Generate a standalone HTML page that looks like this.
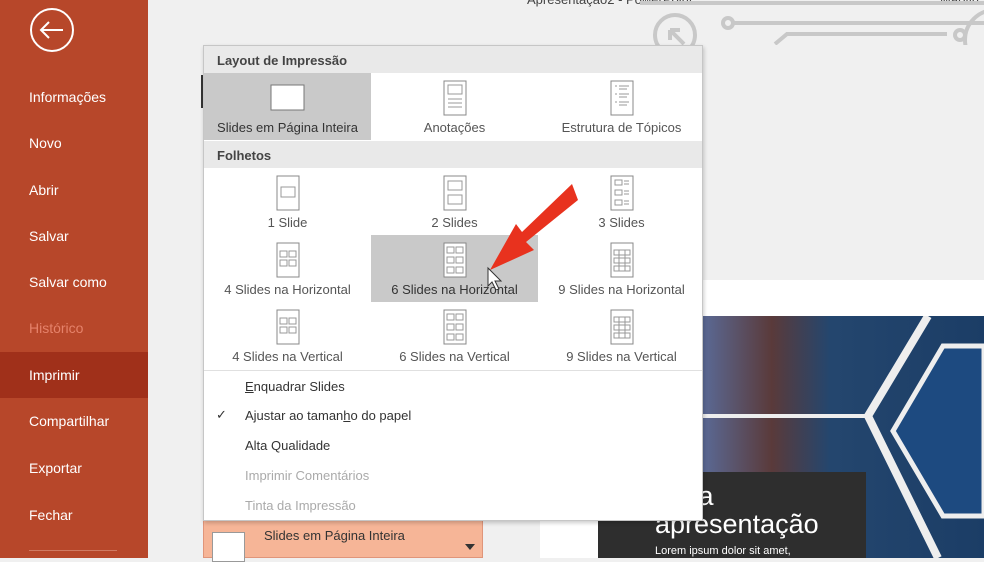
<!DOCTYPE html>
<html><head><meta charset="utf-8"><style>
*{margin:0;padding:0;box-sizing:border-box}
body{width:984px;height:558px;overflow:hidden;background:#f0f0f0;font-family:"Liberation Sans",sans-serif;position:relative;color:#444}
.side{position:absolute;left:0;top:0;width:148px;height:558px;background:#b7472a}
.side div{position:absolute;left:29px;color:#fff;font-size:14px}
.abs{position:absolute}
.dd{position:absolute;left:203px;top:45px;width:500px;height:476px;background:#fff;border:1px solid #c6c6c6;box-shadow:1px 2px 4px rgba(0,0,0,.2)}
.hdr{position:absolute;left:0;width:498px;height:27px;background:#e9e9e9;font-weight:bold;font-size:13px;color:#444;padding:7px 0 0 13px}
.cell{position:absolute;width:167px;height:67px;text-align:center;font-size:13px;color:#555}
.cell svg{display:block;margin:7px auto 4px}
.mi{position:absolute;left:41px;font-size:13px;color:#333}
.dis{color:#aaa}
</style></head><body>
<div class="side">
<svg class="abs" style="left:29px;top:7px" width="46" height="46"><circle cx="23" cy="23" r="21" fill="none" stroke="#fff" stroke-width="2"/><path d="M34 23H12M20 15l-8 8 8 8" fill="none" stroke="#fff" stroke-width="2"/></svg>
<div style="top:89px">Informações</div>
<div style="top:135px">Novo</div>
<div style="top:182px">Abrir</div>
<div style="top:228px">Salvar</div>
<div style="top:274px">Salvar como</div>
<div style="top:320px;color:#e5826a">Histórico</div>
<div style="top:352px;left:0;width:148px;height:46px;background:#a0301a"></div>
<div style="top:367px">Imprimir</div>
<div style="top:413px">Compartilhar</div>
<div style="top:460px">Exportar</div>
<div style="top:507px">Fechar</div>
<div style="top:550px;width:88px;height:1px;background:#d07a62"></div>
</div>
<div class="abs" style="left:527px;top:-8px;font-size:13px;color:#444">Apresentação2 - PowerPoint</div>
<div class="abs" style="left:940px;top:-8px;font-size:13px;color:#444">Marvin</div>
<svg class="abs" style="left:640px;top:0" width="344" height="45"><g fill="none" stroke="#c8c8c8" stroke-width="4"><circle cx="35" cy="35" r="20"/><path d="M30 30l14 14M30 30v10M30 30h10"/><circle cx="88" cy="23" r="5"/><path d="M93 23h260l20 18"/><path d="M135 44l12-10h160"/><circle cx="320" cy="35" r="5"/><path d="M0 3h360l40 40"/><circle cx="366" cy="4" r="5"/><circle cx="355" cy="40" r="30"/></g></svg>
<div class="abs" style="left:540px;top:280px;width:444px;height:278px;background:#fff"></div>
<div class="abs" style="left:598px;top:316px;width:386px;height:242px;background:linear-gradient(90deg,#2b4f7a 0%,#5a6fa0 25%,#5a3a3a 45%,#24466e 60%,#1b3d66 100%)"></div>
<svg class="abs" style="left:598px;top:316px" width="386" height="242"><path d="M330 0L270 100L340 242" fill="none" stroke="#eee" stroke-width="8"/><path d="M0 100H270" stroke="#eee" stroke-width="4"/><path d="M345 30h41v170h-41l-50-85z" fill="#1d4a80" stroke="#eee" stroke-width="5"/></svg>
<div class="abs" style="left:598px;top:472px;width:268px;height:86px;background:#2e2e2e"></div>
<div class="abs" style="left:655px;top:482px;color:#fff;font-size:27px;line-height:28px">lo da<br>apresentação</div>
<div class="abs" style="left:655px;top:545px;color:#fff;font-size:11px">Lorem ipsum dolor sit amet,</div>
<div class="abs" style="left:203px;top:520px;width:280px;height:38px;background:#f6b597;border:1px solid #e0957a"></div>
<div class="abs" style="left:212px;top:532px;width:33px;height:30px;background:#fff;border:1px solid #999"></div>
<div class="abs" style="left:264px;top:528px;font-size:13px;color:#333">Slides em Página Inteira</div>
<div class="abs" style="left:465px;top:544px;border:5px solid transparent;border-top:6px solid #333"></div>
<div class="abs" style="left:201px;top:75px;width:3px;height:33px;background:#333"></div>
<div class="dd">
<div class="hdr" style="top:0">Layout de Impressão</div>
<div class="cell" style="left:0;top:27px;background:#c9c9c9"><svg width="36" height="28" style="margin-top:11px;margin-bottom:8px"><rect x="1" y="1" width="33" height="25" fill="#fff" stroke="#777"/></svg><span style="color:#333">Slides em Página Inteira</span></div>
<div class="cell" style="left:167px;top:27px"><svg width="28" height="36" style="margin-top:7px"><rect x="3" y="1" width="22" height="34" fill="#fff" stroke="#888"/><rect x="7" y="5" width="14" height="9" fill="none" stroke="#999"/><path d="M7 19h14M7 23h14M7 27h14" stroke="#999"/></svg>Anotações</div>
<div class="cell" style="left:334px;top:27px"><svg width="28" height="36" style="margin-top:7px"><rect x="3" y="1" width="22" height="34" fill="#fff" stroke="#888"/><path d="M7 6h2M11 6h10M11 9h8M7 14h2M11 14h10M11 17h8M7 22h2M11 22h10M11 25h8" stroke="#999"/></svg>Estrutura de Tópicos</div>
<div class="hdr" style="top:95px">Folhetos</div>
<div class="cell" style="left:0;top:122px"><svg width="28" height="36"><rect x="3" y="1" width="22" height="34" fill="#fff" stroke="#888"/><rect x="7" y="12" width="14" height="10" fill="none" stroke="#999"/></svg>1 Slide</div>
<div class="cell" style="left:167px;top:122px"><svg width="28" height="36"><rect x="3" y="1" width="22" height="34" fill="#fff" stroke="#888"/><rect x="7" y="6" width="14" height="9" fill="none" stroke="#999"/><rect x="7" y="20" width="14" height="9" fill="none" stroke="#999"/></svg>2 Slides</div>
<div class="cell" style="left:334px;top:122px"><svg width="28" height="36"><rect x="3" y="1" width="22" height="34" fill="#fff" stroke="#888"/><g fill="none" stroke="#999"><rect x="7" y="5" width="7" height="5"/><rect x="7" y="15" width="7" height="5"/><rect x="7" y="25" width="7" height="5"/><path d="M16 6h5M16 9h5M16 16h5M16 19h5M16 26h5M16 29h5"/></g></svg>3 Slides</div>
<div class="cell" style="left:0;top:189px"><svg width="28" height="36"><rect x="3" y="1" width="22" height="34" fill="#fff" stroke="#888"/><g fill="none" stroke="#999"><rect x="6" y="9" width="7" height="6"/><rect x="15" y="9" width="7" height="6"/><rect x="6" y="18" width="7" height="6"/><rect x="15" y="18" width="7" height="6"/></g></svg>4 Slides na Horizontal</div>
<div class="cell" style="left:167px;top:189px;background:#c9c9c9;color:#333"><svg width="28" height="36"><rect x="3" y="1" width="22" height="34" fill="#fff" stroke="#888"/><g fill="none" stroke="#999"><rect x="6" y="5" width="7" height="6"/><rect x="15" y="5" width="7" height="6"/><rect x="6" y="15" width="7" height="6"/><rect x="15" y="15" width="7" height="6"/><rect x="6" y="25" width="7" height="6"/><rect x="15" y="25" width="7" height="6"/></g></svg>6 Slides na Horizontal</div>
<div class="cell" style="left:334px;top:189px"><svg width="28" height="36"><rect x="3" y="1" width="22" height="34" fill="#fff" stroke="#888"/><g fill="none" stroke="#999"><path d="M6 8h16v5H6zM6 16h16v5H6zM6 24h16v5H6zM11 8v21M17 8v21"/></g></svg>9 Slides na Horizontal</div>
<div class="cell" style="left:0;top:256px"><svg width="28" height="36"><rect x="3" y="1" width="22" height="34" fill="#fff" stroke="#888"/><g fill="none" stroke="#999"><rect x="6" y="9" width="7" height="6"/><rect x="15" y="9" width="7" height="6"/><rect x="6" y="18" width="7" height="6"/><rect x="15" y="18" width="7" height="6"/></g></svg>4 Slides na Vertical</div>
<div class="cell" style="left:167px;top:256px"><svg width="28" height="36"><rect x="3" y="1" width="22" height="34" fill="#fff" stroke="#888"/><g fill="none" stroke="#999"><rect x="6" y="5" width="7" height="6"/><rect x="15" y="5" width="7" height="6"/><rect x="6" y="15" width="7" height="6"/><rect x="15" y="15" width="7" height="6"/><rect x="6" y="25" width="7" height="6"/><rect x="15" y="25" width="7" height="6"/></g></svg>6 Slides na Vertical</div>
<div class="cell" style="left:334px;top:256px"><svg width="28" height="36"><rect x="3" y="1" width="22" height="34" fill="#fff" stroke="#888"/><g fill="none" stroke="#999"><path d="M6 8h16v5H6zM6 16h16v5H6zM6 24h16v5H6zM11 8v21M17 8v21"/></g></svg>9 Slides na Vertical</div>
<div class="abs" style="left:0;top:324px;width:498px;height:1px;background:#e0e0e0"></div>
<div class="mi" style="top:333px"><u>E</u>nquadrar Slides</div>
<div class="abs" style="left:12px;top:361px;font-size:13px;color:#333">✓</div>
<div class="mi" style="top:362px">Ajustar ao taman<u>h</u>o do papel</div>
<div class="mi" style="top:392px">Alta Qualidade</div>
<div class="mi dis" style="top:422px">Imprimir Comentários</div>
<div class="mi dis" style="top:452px">Tinta da Impressão</div>
</div>
<svg class="abs" style="left:480px;top:180px" width="100" height="110"><path d="M92 4L42 52l-6-8-26 46 44-20-8-8 52-42z" fill="#e8321e"/><path d="M8 88l0 18 4-4 4 8 3-1-4-8 6 0z" fill="#fff" stroke="#333"/></svg>
</body></html>
